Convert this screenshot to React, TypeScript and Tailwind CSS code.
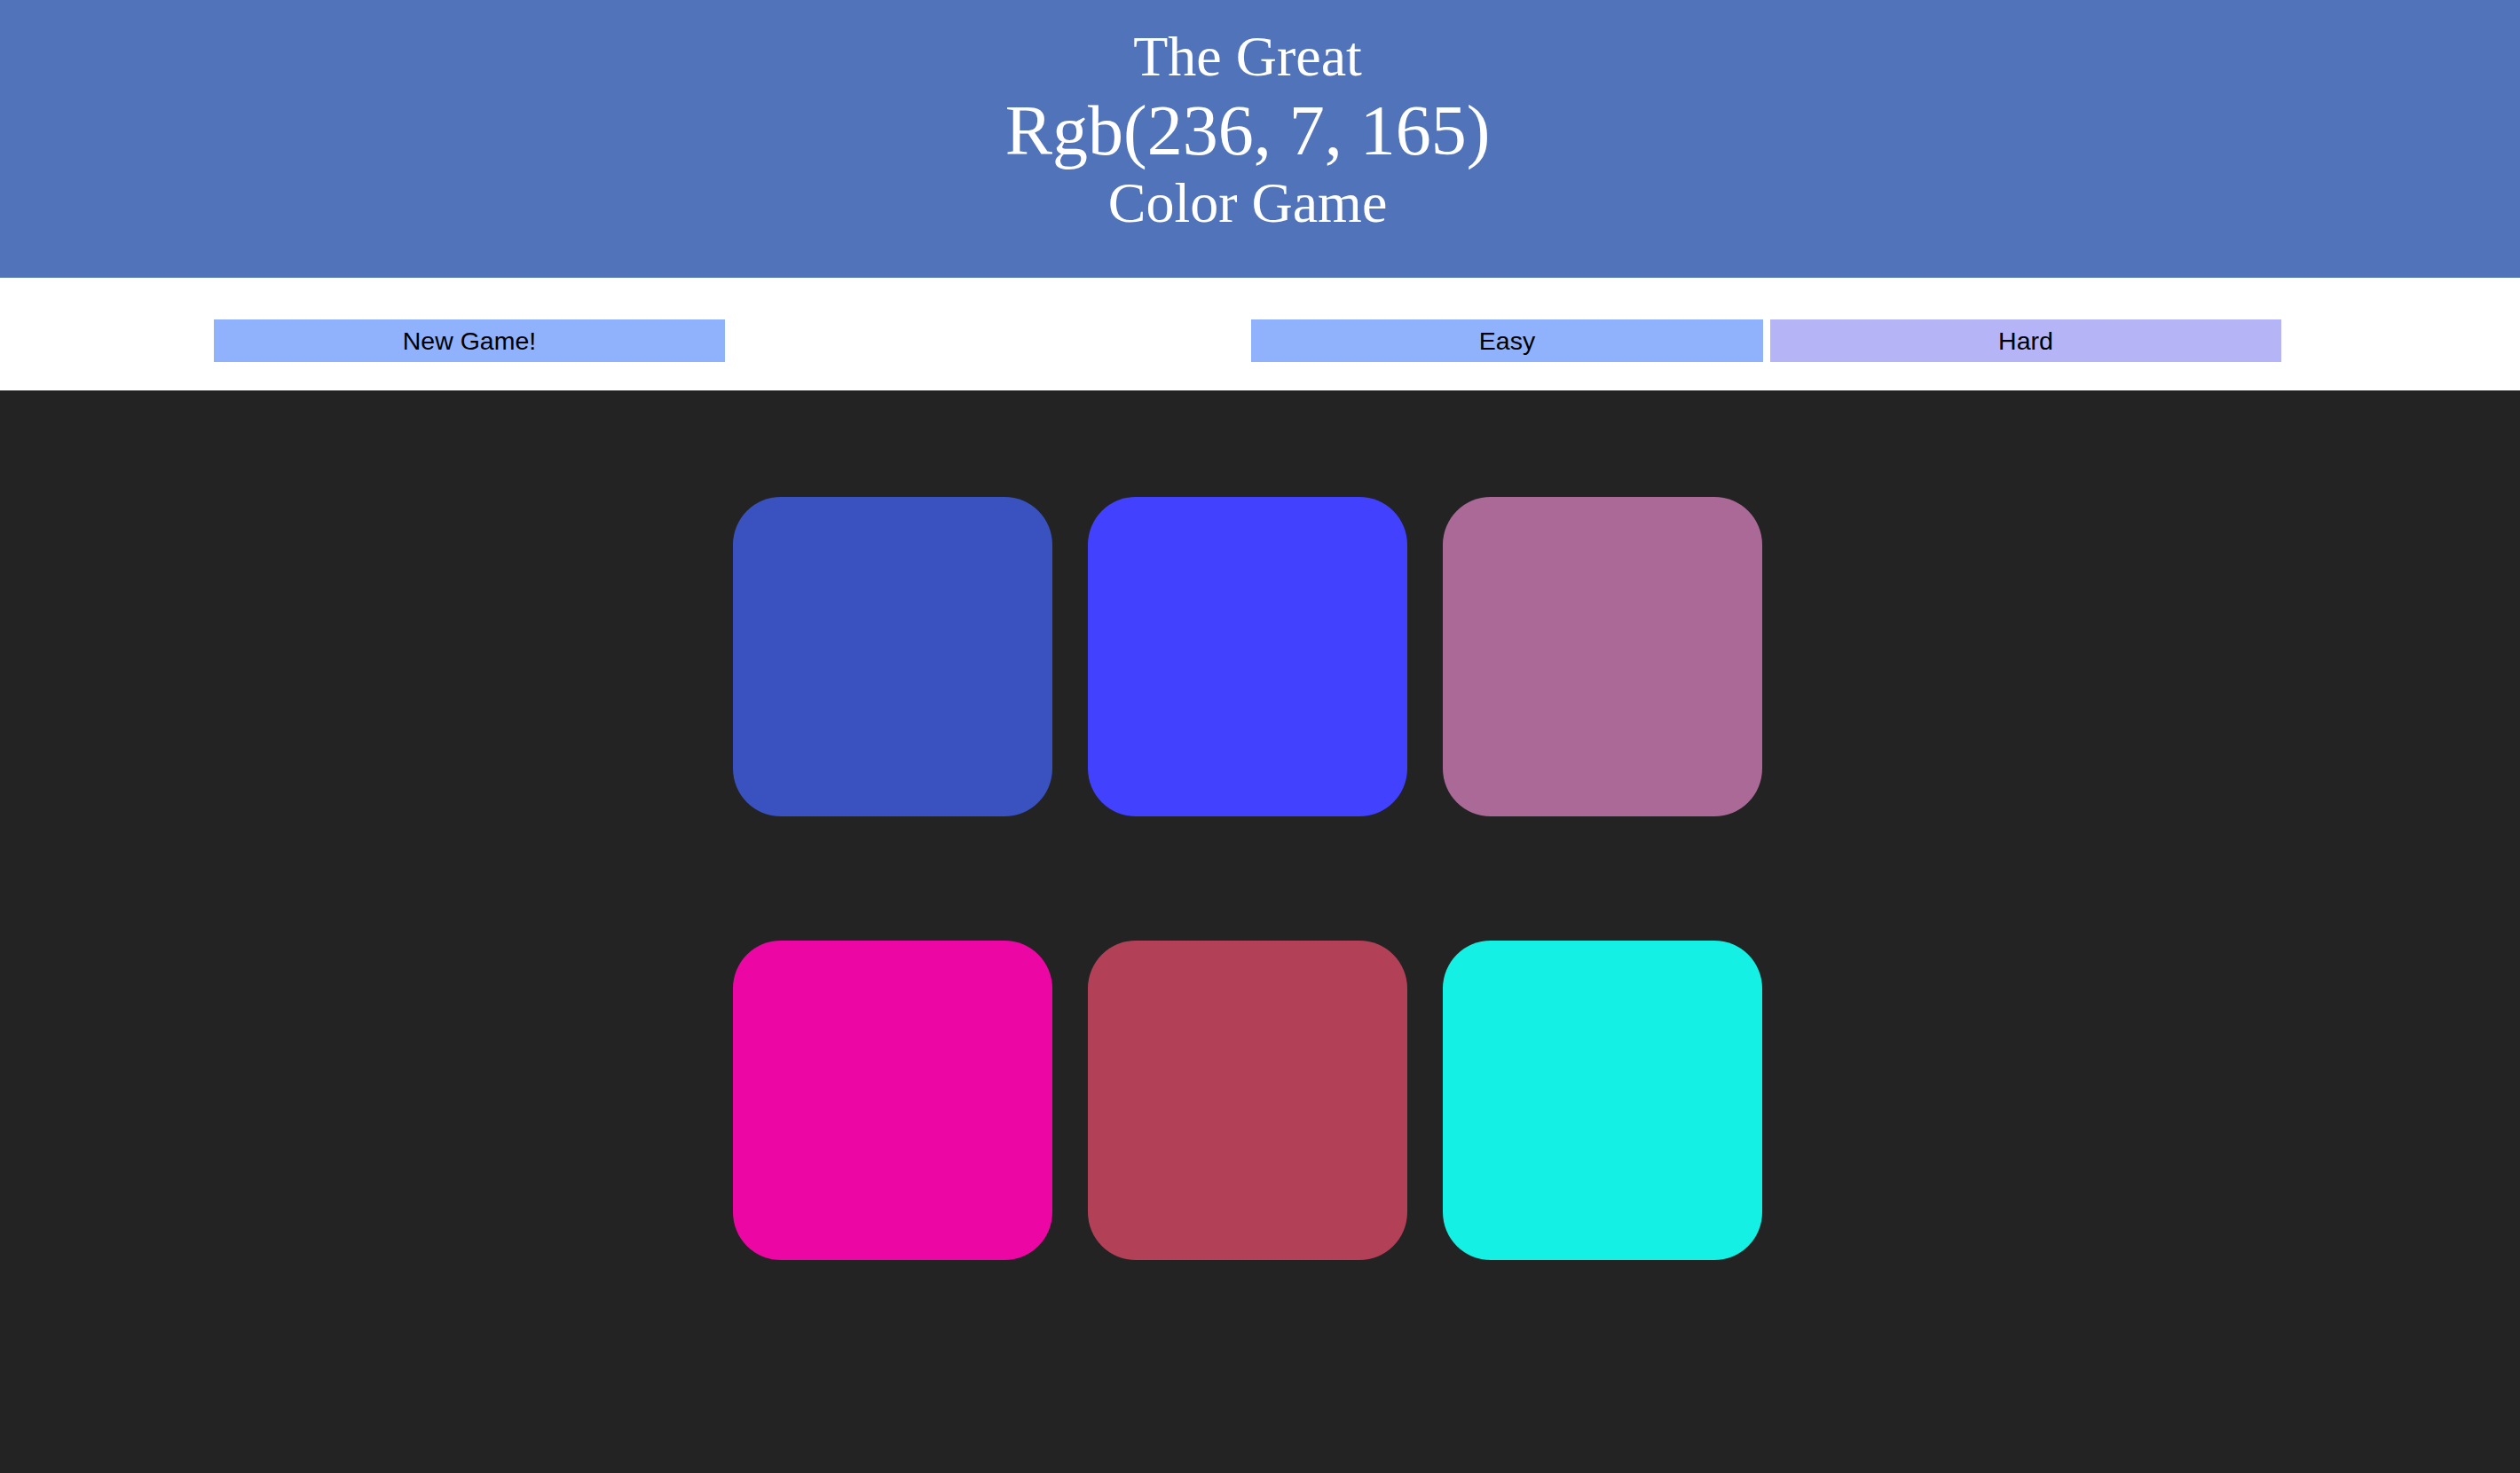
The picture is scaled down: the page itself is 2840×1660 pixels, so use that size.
const squares = ["#3952c0", "#4141fe", "#ab6998", "#ec07a5", "#b24157", "#14f0e3"];

export default function App() {
  return (
    <div className="min-h-screen bg-[#232323]">
      {/* Title */}
      <header className="h-[313px] bg-[#5173ba] text-white font-['Liberation_Serif',serif]">
        <div className="w-[2812px] pt-[28px] flex flex-col items-center">
          <span className="block text-[64px] leading-[72px]">The Great</span>
          <span className="block text-[80px] leading-[94px]">Rgb(236, 7, 165)</span>
          <span className="block text-[64px] leading-[69px]">Color Game</span>
        </div>
      </header>

      {/* Controls */}
      <div className="h-[127px] bg-white font-['Liberation_Sans',Arial,sans-serif]">
        <div className="w-[2812px] px-[241px] pt-[47px] flex">
          <button className="w-[576px] h-[48px] bg-[#90b2fc] text-black text-[28.5px] leading-none">
            New Game!
          </button>
          <div className="ml-auto flex gap-[8px]">
            <button className="w-[577px] h-[48px] bg-[#90b2fc] text-black text-[28.5px] leading-none">
              Easy
            </button>
            <button className="w-[576px] h-[48px] bg-[#b4b4f6] text-black text-[28.5px] leading-none">
              Hard
            </button>
          </div>
        </div>
      </div>

      {/* Board */}
      <div className="w-[2812px] pt-[120px] pb-[240px]">
        <div className="mx-auto w-[1160px] grid grid-cols-3 gap-x-[40px] gap-y-[140px]">
          {squares.map((c) => (
            <div
              key={c}
              className="w-[360px] h-[360px] rounded-[15%]"
              style={{ backgroundColor: c }}
            />
          ))}
        </div>
      </div>
    </div>
  );
}
